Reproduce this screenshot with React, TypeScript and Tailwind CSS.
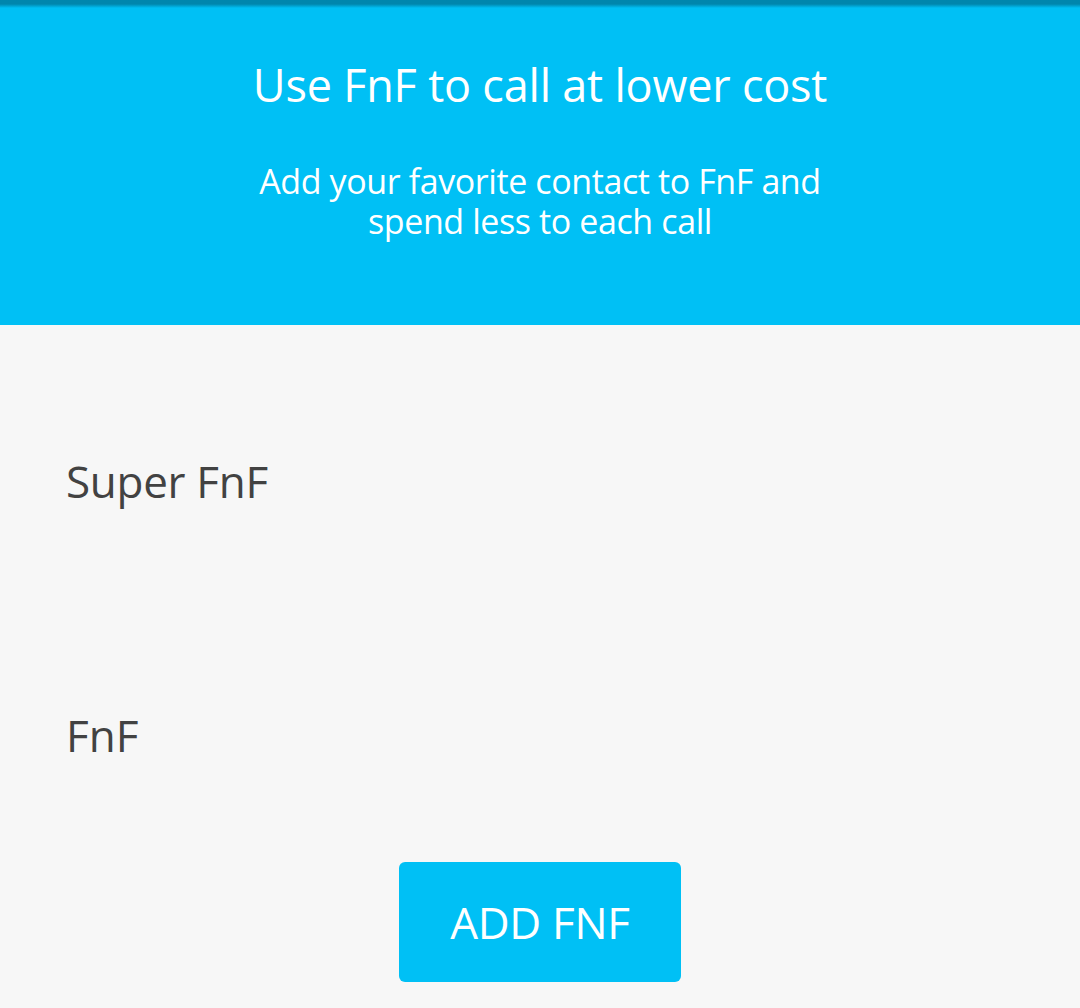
export default function App() {
  return (
    <div className="w-[1080px] h-[1008px] bg-[#f7f7f7] flex flex-col overflow-hidden" style={{ fontFamily: '"Open Sans", "Noto Sans", sans-serif' }}>
      <div className="relative h-[325px] shrink-0 bg-[#00c0f5] flex flex-col items-center text-white">
        <div className="absolute top-0 left-0 right-0 h-[8px] bg-gradient-to-b from-[#0086ad] via-[#0086ad] to-[#00c0f5]" />
        <h1 className="mt-[55px] text-[45px] leading-[60px] tracking-[-0.2px]">Use FnF to call at lower cost</h1>
        <p className="mt-[46px] text-[34px] leading-[40px] text-center tracking-[-0.4px]">
          Add your favorite contact to FnF and<br />spend less to each call
        </p>
      </div>
      <div className="flex-1 flex flex-col px-[66px] text-[#424242]">
        <div className="mt-[126px] text-[44px] leading-[60px] tracking-[-0.3px]">Super FnF</div>
        <div className="mt-[194px] text-[44px] leading-[60px]">FnF</div>
        <div className="mt-[97px] flex justify-center -mx-[66px]">
          <button className="w-[282px] h-[120px] rounded-[6px] bg-[#00c0f5] text-white text-[44px] tracking-[-0.3px]">ADD FNF</button>
        </div>
      </div>
    </div>
  );
}
